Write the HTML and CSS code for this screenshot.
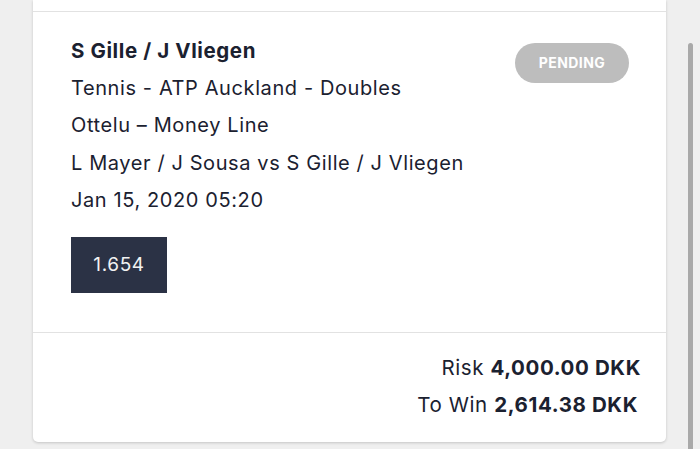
FILE: index.html
```html
<html>

<head>
	<meta charset="utf-8">
	<title>Bet slip</title>
	<link rel="stylesheet" href="styles.css">
</head>

<body>
	<main class="page">
		<div class="card">
			<div class="card-top"></div>
			<div class="bet">
				<div class="bet-info">
					<div class="bet-title">S Gille / J Vliegen</div>
					<div class="bet-line">Tennis - ATP Auckland - Doubles</div>
					<div class="bet-line">Ottelu &ndash; Money Line</div>
					<div class="bet-line">L Mayer / J Sousa vs S Gille / J Vliegen</div>
					<div class="bet-line">Jan 15, 2020 05:20</div>
					<div class="odds">1.654</div>
				</div>
				<span class="status">PENDING</span>
			</div>
			<div class="totals">
				<div class="total-row">Risk <b>4,000.00 DKK</b></div>
				<div class="total-row win">To Win <b>2,614.38 DKK</b></div>
			</div>
		</div>
	</main>
	<div class="scrollbar"></div>
</body>

</html>
```
FILE: styles.css
```css
html {
	background-color: #efefef;
}

body {
	margin: 0;
	font-family: Inter, "Liberation Sans", sans-serif;
	color: #1b2130;
}

.page {
	padding: 0 34px 8px 33px;
}

.card {
	background-color: #ffffff;
	border-radius: 0 0 5px 5px;
	box-shadow: 0 1px 3px rgba(0, 0, 0, 0.18);
}

.card-top {
	height: 11px;
	border-bottom: 1px solid #e2e2e2;
}

.bet {
	display: flex;
	justify-content: space-between;
	align-items: flex-start;
	padding: 20px 37px 39px 38px;
	border-bottom: 1px solid #e2e2e2;
}

.bet-title {
	font-size: 20.5px;
	font-weight: 700;
	letter-spacing: 0.6px;
	line-height: 37.5px;
}

.bet-line {
	font-size: 20px;
	letter-spacing: 0.6px;
	line-height: 37.5px;
}

.odds {
	display: inline-block;
	margin-top: 17px;
	width: 96px;
	height: 56px;
	line-height: 56px;
	text-align: center;
	background-color: #2b3245;
	color: #f2f2f2;
	font-size: 19px;
	letter-spacing: 0.6px;
}

.status {
	margin-top: 11px;
	width: 114px;
	height: 40px;
	line-height: 40px;
	border-radius: 20px;
	text-align: center;
	background-color: #bdbdbd;
	color: #ffffff;
	font-size: 14px;
	font-weight: 700;
	letter-spacing: 0.4px;
}

.totals {
	padding: 16px 25px 19px;
	text-align: right;
}

.total-row {
	font-size: 20.5px;
	letter-spacing: 0.6px;
	line-height: 37px;
}

.total-row.win {
	padding-right: 3px;
}

.total-row b {
	font-weight: 700;
}

.scrollbar {
	position: fixed;
	top: 43px;
	right: 7px;
	width: 5px;
	height: 420px;
	border-radius: 3px;
	background-color: #a9a9a9;
}
```
